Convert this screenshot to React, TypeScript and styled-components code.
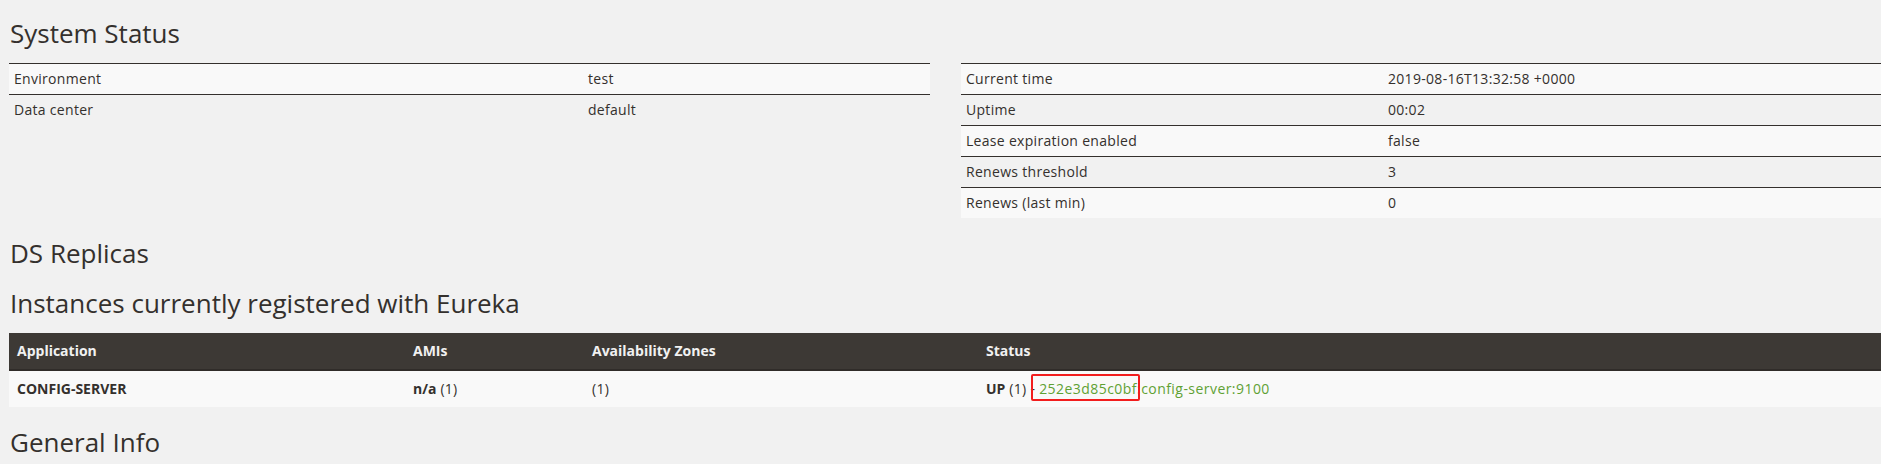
import React from "react";
import styled, { createGlobalStyle } from "styled-components";

const Global = createGlobalStyle`
  html, body {
    margin: 0;
    padding: 0;
    background: #f1f1f1;
    overflow: hidden;
  }
  body {
    font-family: "Open Sans", "Noto Sans", sans-serif;
    font-size: 14px;
    letter-spacing: 0.3px;
    color: #34302d;
  }
`;

const Page = styled.div`
  width: 1873px;
  padding: 0 9px;
`;

const Heading = styled.h2<{ $first?: boolean }>`
  margin: ${(p) => (p.$first ? "18px" : "20px")} 0 15px;
  padding-left: 1px;
  font-size: 26px;
  font-weight: 500;
  letter-spacing: 0;
  line-height: 30px;
  color: #34302d;
`;

const Columns = styled.div`
  display: grid;
  grid-template-columns: 921px 921px;
  column-gap: 31px;
  align-items: start;
`;

const InfoTable = styled.table`
  width: 100%;
  border-collapse: collapse;
  table-layout: fixed;
`;

const InfoRow = styled.tr<{ $odd: boolean }>`
  background: ${(p) => (p.$odd ? "#f9f9f9" : "transparent")};
`;

const InfoCell = styled.td<{ $w?: number }>`
  ${(p) => (p.$w ? `width: ${p.$w}px;` : "")}
  padding: 5px;
  line-height: 20px;
  border-top: 1px solid #34302d;
  text-align: left;
  vertical-align: top;
`;

const GridTable = styled.table`
  width: 100%;
  border-collapse: collapse;
  table-layout: fixed;
`;

const HeadCell = styled.th<{ $w?: number }>`
  ${(p) => (p.$w ? `width: ${p.$w}px;` : "")}
  padding: 8px;
  line-height: 20px;
  background: #3d3935;
  color: #f1f1f1;
  font-weight: 700;
  letter-spacing: 0;
  text-align: left;
  border-bottom: 2px solid #302c29;
`;

const BodyRow = styled.tr`
  background: #f9f9f9;
`;

const BodyCell = styled.td`
  padding: 8px;
  line-height: 20px;
  text-align: left;
  vertical-align: top;
`;

const Strong = styled.b`
  font-weight: 700;
  letter-spacing: 0;
`;

const Link = styled.a`
  color: #5fa134;
  text-decoration: none;
  letter-spacing: 0.45px;
`;

const Marked = styled.span`
  position: relative;
  &::after {
    content: "";
    position: absolute;
    left: -8px;
    right: -3px;
    top: -5px;
    bottom: -3px;
    border: 2px solid #f21d1d;
    border-radius: 2px;
  }
`;

type Pair = [string, string];

const leftRows: Pair[] = [
  ["Environment", "test"],
  ["Data center", "default"],
];

const rightRows: Pair[] = [
  ["Current time", "2019-08-16T13:32:58 +0000"],
  ["Uptime", "00:02"],
  ["Lease expiration enabled", "false"],
  ["Renews threshold", "3"],
  ["Renews (last min)", "0"],
];

function KeyValueTable({ rows, labelWidth }: { rows: Pair[]; labelWidth: number }) {
  return (
    <InfoTable>
      <tbody>
        {rows.map(([k, v], i) => (
          <InfoRow key={k} $odd={i % 2 === 0}>
            <InfoCell $w={labelWidth}>{k}</InfoCell>
            <InfoCell>{v}</InfoCell>
          </InfoRow>
        ))}
      </tbody>
    </InfoTable>
  );
}

export default function App() {
  return (
    <>
      <Global />
      <Page>
        <Heading $first>System Status</Heading>
        <Columns>
          <KeyValueTable rows={leftRows} labelWidth={564} />
          <KeyValueTable rows={rightRows} labelWidth={412} />
        </Columns>
        <Heading>DS Replicas</Heading>
        <Heading>Instances currently registered with Eureka</Heading>
        <GridTable>
          <thead>
            <tr>
              <HeadCell $w={380}>Application</HeadCell>
              <HeadCell $w={163}>AMIs</HeadCell>
              <HeadCell $w={378}>Availability Zones</HeadCell>
              <HeadCell>Status</HeadCell>
            </tr>
          </thead>
          <tbody>
            <BodyRow>
              <BodyCell>
                <Strong>CONFIG-SERVER</Strong>
              </BodyCell>
              <BodyCell>
                <Strong>n/a</Strong> (1)
              </BodyCell>
              <BodyCell>(1)</BodyCell>
              <BodyCell>
                <Strong>UP</Strong> (1) -{" "}
                <Link href="#">
                  <Marked>252e3d85c0bf</Marked>:config-server:9100
                </Link>
              </BodyCell>
            </BodyRow>
          </tbody>
        </GridTable>
        <Heading>General Info</Heading>
      </Page>
    </>
  );
}
